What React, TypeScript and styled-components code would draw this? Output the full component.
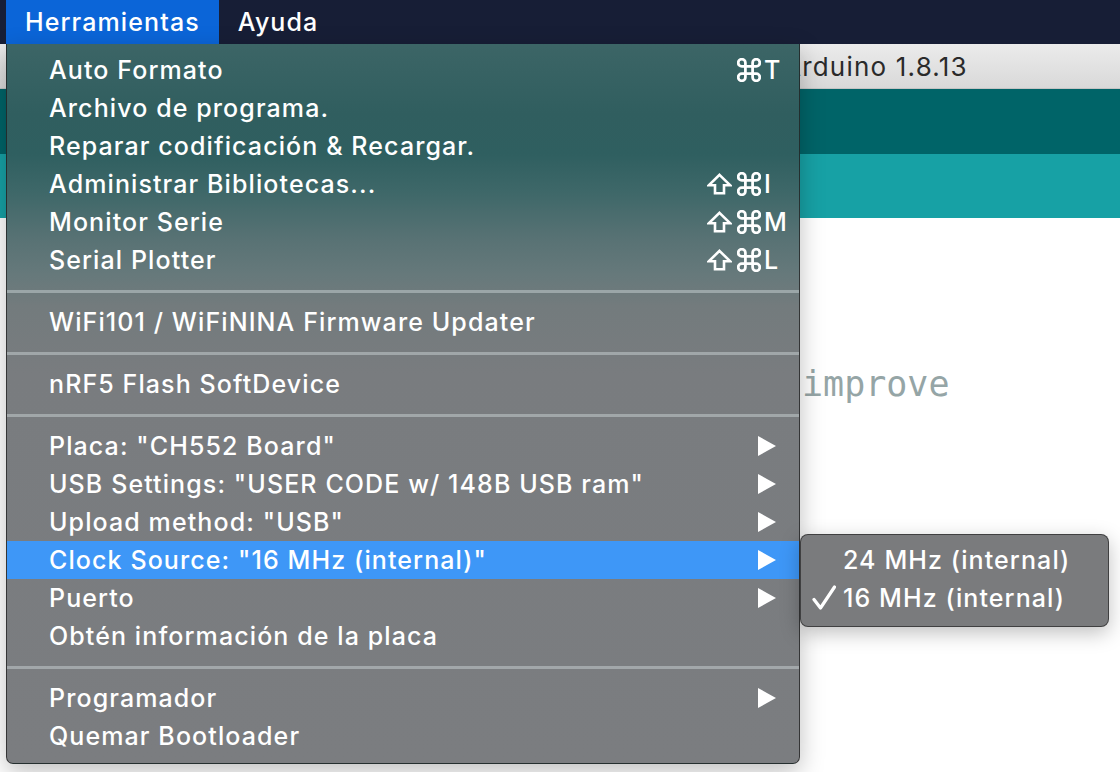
import React from "react";
import styled, { createGlobalStyle } from "styled-components";

const GlobalStyle = createGlobalStyle`
  html, body { margin: 0; padding: 0; background: #ffffff; }
  body { overflow: hidden; font-family: "Inter", "Noto Sans", "DejaVu Sans", sans-serif; }
  * { box-sizing: border-box; }
`;

const Screen = styled.div`
  position: relative;
  width: 1120px;
  height: 772px;
  overflow: hidden;
  display: flex;
  flex-direction: column;
  background: #ffffff;
`;

const MenuBar = styled.div`
  height: 44px;
  flex: 0 0 44px;
  background: #171e36;
  display: flex;
  align-items: stretch;
  padding-left: 6px;
`;

const MenuBarItem = styled.div<{ $active?: boolean }>`
  display: flex;
  align-items: center;
  padding: 0 19px;
  font-size: 25px;
  letter-spacing: 1.1px;
  font-weight: 500;
  color: #ffffff;
  background: ${(p) => (p.$active ? "#0b65d8" : "transparent")};
`;

const AppWindow = styled.div`
  flex: 1;
  display: flex;
  flex-direction: column;
`;

const TitleBar = styled.div`
  height: 45px;
  flex: 0 0 45px;
  background: linear-gradient(#ebebeb, #d9d9d9);
  border-bottom: 1px solid #c4c4c4;
  display: flex;
  align-items: center;
  padding-left: 783px;
`;

const TitleText = styled.span`
  font-size: 26px;
  letter-spacing: 1.2px;
  color: #2a2a2a;
`;

const Strip = styled.div<{ $bg: string; $h: number }>`
  height: ${(p) => p.$h}px;
  flex: 0 0 ${(p) => p.$h}px;
  background: ${(p) => p.$bg};
`;

const Editor = styled.div`
  flex: 1;
  background: #ffffff;
  padding-top: 146px;
  padding-left: 802px;
`;

const CodeLine = styled.div`
  font-family: "DejaVu Sans Mono", "Liberation Mono", monospace;
  font-size: 35px;
  line-height: 40px;
  color: #95a5a6;
`;

const DropMenu = styled.div`
  position: absolute;
  left: 6px;
  top: 44px;
  width: 794px;
  height: 720px;
  padding: 7px 0 8px;
  border: 1px solid rgba(30, 30, 30, 0.75);
  border-top: none;
  border-radius: 0 0 7px 7px;
  background: linear-gradient(
    180deg,
    #3c6566 0px,
    #305e5f 70px,
    #2f5f60 110px,
    #3f6869 150px,
    #587274 195px,
    #66797b 230px,
    #737b7d 262px,
    #797c7f 330px,
    #7b7d80 100%
  );
  box-shadow: 0 8px 24px rgba(0, 0, 0, 0.25);
  color: #ffffff;
  display: flex;
  flex-direction: column;
`;

const MenuRow = styled.div<{ $highlight?: boolean }>`
  height: 38px;
  flex: 0 0 38px;
  display: flex;
  align-items: center;
  padding: 0 0 0 42px;
  background: ${(p) => (p.$highlight ? "#3e97f7" : "transparent")};
  font-size: 25px;
  letter-spacing: 1.1px;
  font-weight: 500;
`;

const RowLabel = styled.span`
  flex: 1;
  white-space: nowrap;
`;

const Shortcut = styled.span`
  display: flex;
  align-items: center;
`;

const Key = styled.span`
  width: 35px;
  margin-left: 3px;
  font-size: 25px;
  font-weight: 500;
  letter-spacing: 0;
`;

const IconSvg = styled.svg<{ $gapRight?: number }>`
  display: block;
  flex: 0 0 auto;
  margin-right: ${(p) => p.$gapRight ?? 0}px;
`;

const ArrowCell = styled.span`
  display: flex;
  margin-right: 23px;
`;

const Separator = styled.div`
  height: 24px;
  flex: 0 0 24px;
  display: flex;
  align-items: center;
  &::after {
    content: "";
    display: block;
    width: 100%;
    height: 3px;
    background: rgba(210, 220, 222, 0.45);
  }
`;

const SubMenu = styled.div`
  position: absolute;
  left: 800px;
  top: 534px;
  width: 309px;
  height: 93px;
  padding: 6px 0;
  border: 1px solid rgba(40, 40, 40, 0.7);
  border-radius: 8px;
  background: #7a7b7d;
  box-shadow: 0 6px 20px rgba(0, 0, 0, 0.25);
  color: #ffffff;
  display: flex;
  flex-direction: column;
`;

const SubRow = styled.div`
  height: 38px;
  flex: 0 0 38px;
  display: flex;
  align-items: center;
  font-size: 25px;
  letter-spacing: 1.1px;
  font-weight: 500;
`;

const CheckCell = styled.span`
  width: 42px;
  padding-left: 11px;
  display: flex;
  align-items: center;
`;

const Arrow = () => (
  <IconSvg width={18} height={20} viewBox="0 0 18 20">
    <polygon points="0,0 18,10 0,20" fill="#ffffff" />
  </IconSvg>
);

const ShiftIcon = () => (
  <IconSvg width={25} height={22} viewBox="0 0 25 22" $gapRight={5}>
    <path
      d="M12.5 1.8 L23 12.2 H17 V20.3 H8 V12.2 H2 Z"
      fill="none"
      stroke="#ffffff"
      strokeWidth={2.6}
      strokeLinejoin="miter"
    />
  </IconSvg>
);

const CmdIcon = () => (
  <IconSvg width={24} height={24} viewBox="2 2 20 20">
    <path
      d="M15 6v12a3 3 0 1 0 3-3H6a3 3 0 1 0 3 3V6a3 3 0 1 0-3 3h12a3 3 0 1 0-3-3"
      fill="none"
      stroke="#ffffff"
      strokeWidth={2.3}
      strokeLinejoin="round"
    />
  </IconSvg>
);

const CheckIcon = () => (
  <IconSvg width={24} height={26} viewBox="0 0 24 26">
    <path
      d="M2 14.5 L8.5 23 L22.5 2"
      fill="none"
      stroke="#ffffff"
      strokeWidth={3.2}
      strokeLinecap="round"
      strokeLinejoin="round"
    />
  </IconSvg>
);

type Item =
  | { kind: "sep" }
  | { kind: "item"; label: string; shift?: boolean; key?: string; sub?: boolean; hl?: boolean };

const items: Item[] = [
  { kind: "item", label: "Auto Formato", key: "T" },
  { kind: "item", label: "Archivo de programa." },
  { kind: "item", label: "Reparar codificación & Recargar." },
  { kind: "item", label: "Administrar Bibliotecas...", shift: true, key: "I" },
  { kind: "item", label: "Monitor Serie", shift: true, key: "M" },
  { kind: "item", label: "Serial Plotter", shift: true, key: "L" },
  { kind: "sep" },
  { kind: "item", label: "WiFi101 / WiFiNINA Firmware Updater" },
  { kind: "sep" },
  { kind: "item", label: "nRF5 Flash SoftDevice" },
  { kind: "sep" },
  { kind: "item", label: 'Placa: "CH552 Board"', sub: true },
  { kind: "item", label: 'USB Settings: "USER CODE w/ 148B USB ram"', sub: true },
  { kind: "item", label: 'Upload method: "USB"', sub: true },
  { kind: "item", label: 'Clock Source: "16 MHz (internal)"', sub: true, hl: true },
  { kind: "item", label: "Puerto", sub: true },
  { kind: "item", label: "Obtén información de la placa" },
  { kind: "sep" },
  { kind: "item", label: "Programador", sub: true },
  { kind: "item", label: "Quemar Bootloader" },
];

export default function App() {
  return (
    <>
      <GlobalStyle />
      <Screen>
        <MenuBar>
          <MenuBarItem $active>Herramientas</MenuBarItem>
          <MenuBarItem>Ayuda</MenuBarItem>
        </MenuBar>
        <AppWindow>
          <TitleBar>
            <TitleText>Arduino 1.8.13</TitleText>
          </TitleBar>
          <Strip $bg="#006468" $h={65} />
          <Strip $bg="#17a1a5" $h={64} />
          <Editor>
            <CodeLine>improve</CodeLine>
          </Editor>
        </AppWindow>

        <DropMenu>
          {items.map((it, i) =>
            it.kind === "sep" ? (
              <Separator key={i} />
            ) : (
              <MenuRow key={i} $highlight={it.hl}>
                <RowLabel>{it.label}</RowLabel>
                {it.key && (
                  <Shortcut>
                    {it.shift && <ShiftIcon />}
                    <CmdIcon />
                    <Key>{it.key}</Key>
                  </Shortcut>
                )}
                {it.sub && (
                  <ArrowCell>
                    <Arrow />
                  </ArrowCell>
                )}
              </MenuRow>
            )
          )}
        </DropMenu>

        <SubMenu>
          <SubRow>
            <CheckCell />
            24 MHz (internal)
          </SubRow>
          <SubRow>
            <CheckCell>
              <CheckIcon />
            </CheckCell>
            16 MHz (internal)
          </SubRow>
        </SubMenu>
      </Screen>
    </>
  );
}
